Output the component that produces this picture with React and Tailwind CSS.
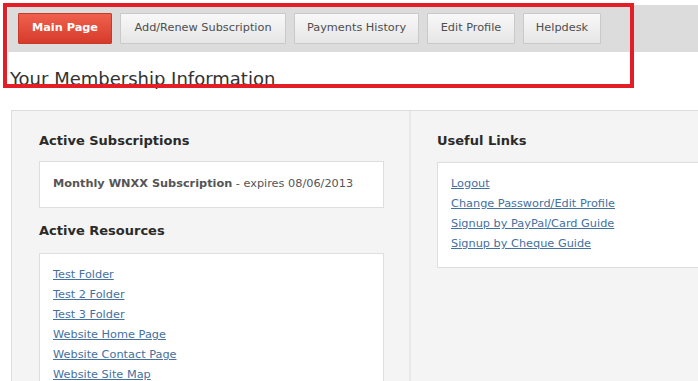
import React from "react";

const tabs = [
  { label: "Main Page", width: "w-[94px]", active: true },
  { label: "Add/Renew Subscription", width: "w-[166px]" },
  { label: "Payments History", width: "w-[125px]" },
  { label: "Edit Profile", width: "w-[88px]" },
  { label: "Helpdesk", width: "w-[78px]" },
];

const resources = [
  "Test Folder",
  "Test 2 Folder",
  "Test 3 Folder",
  "Website Home Page",
  "Website Contact Page",
  "Website Site Map",
];

const usefulLinks = [
  "Logout",
  "Change Password/Edit Profile",
  "Signup by PayPal/Card Guide",
  "Signup by Cheque Guide",
];

const LinkList = ({ items }) => (
  <ul className="flex flex-col">
    {items.map((item) => (
      <li key={item} className="text-[11.3px] leading-[20px]">
        <a href="#" className="text-[#44719f] underline">
          {item}
        </a>
      </li>
    ))}
  </ul>
);

export default function App() {
  return (
    <div className="relative w-[698px] h-[381px] overflow-hidden bg-white font-['DejaVu_Sans',sans-serif]">
      {/* tab bar */}
      <div className="mt-[5px] ml-[8px] h-[47px] bg-[#dcdcdc] flex items-start gap-2 pl-[10px] pt-[8px]">
        {tabs.map((tab) =>
          tab.active ? (
            <button
              key={tab.label}
              className={`${tab.width} h-[31px] flex items-center justify-center rounded-[1px] border border-[#c7392b] bg-gradient-to-b from-[#ef604d] to-[#d63a2b] text-white font-bold text-[11.3px]`}
            >
              {tab.label}
            </button>
          ) : (
            <button
              key={tab.label}
              className={`${tab.width} h-[31px] flex items-center justify-center rounded-[1px] border border-[#c9c9c9] bg-gradient-to-b from-[#f8f8f8] to-[#e6e6e6] text-[#4e4e4e] text-[11.3px]`}
            >
              {tab.label}
            </button>
          )
        )}
      </div>

      <h1 className="mt-[16px] pl-[10px] text-[18px] leading-[22px] text-[#333]">
        Your Membership Information
      </h1>

      {/* content panel */}
      <div className="mt-[20px] ml-[11px] w-[720px] h-[300px] border border-[#dddddd] bg-[#f4f4f4] flex">
        <div className="w-[399px] shrink-0 border-r-2 border-[#e8e8e8] pl-[27px] pr-[25px] pt-[22px]">
          <h2 className="text-[13px] leading-[16px] font-bold text-[#2a2a2a]">
            Active Subscriptions
          </h2>
          <div className="mt-[12px] h-[47px] bg-white border border-[#dedede] pl-[13px] pt-[14px] text-[11.3px] leading-[16px] text-[#555]">
            <span className="font-bold">Monthly WNXX Subscription</span> - expires 08/06/2013
          </div>

          <h2 className="mt-[15px] text-[13px] leading-[16px] font-bold text-[#2a2a2a]">
            Active Resources
          </h2>
          <div className="mt-[14px] h-[200px] bg-white border border-[#dedede] pl-[13px] pt-[11px]">
            <LinkList items={resources} />
          </div>
        </div>

        <div className="flex-1 pl-[26px] pt-[22px]">
          <h2 className="text-[13px] leading-[16px] font-bold text-[#2a2a2a]">
            Useful Links
          </h2>
          <div className="mt-[13px] w-[300px] h-[106px] bg-white border border-[#dedede] pl-[13px] pt-[11px]">
            <LinkList items={usefulLinks} />
          </div>
        </div>
      </div>

      {/* red annotation frame */}
      <div className="absolute left-[3px] top-[3px] w-[631px] h-[85px] border-4 border-[#e31e26] pointer-events-none" />
    </div>
  );
}
